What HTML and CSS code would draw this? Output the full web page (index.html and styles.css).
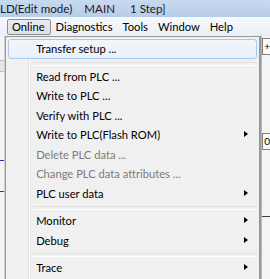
FILE: index.html
```html
<!DOCTYPE html>
<html lang="en">

<head>
    <meta charset="UTF-8">
    <title>Online menu</title>
    <link rel="stylesheet" href="styles.css">
</head>

<body>
    <div class="titlebar">
        <span class="title-part">LD(Edit mode)</span>
        <span class="title-part sheet">MAIN</span>
        <span class="title-part">1 Step]</span>
    </div>
    <div class="menubar">
        <span class="menubar-item open">Online</span>
        <span class="menubar-item">Diagnostics</span>
        <span class="menubar-item">Tools</span>
        <span class="menubar-item">Window</span>
        <span class="menubar-item">Help</span>
    </div>
    <div class="workspace">
        <div class="left-pane">
            <div class="pane-box"></div>
            <div class="pane-line blue"></div>
            <div class="pane-line dark"></div>
            <div class="pane-line blue"></div>
        </div>
        <ul class="dropdown">
            <li class="item active">Transfer setup ...</li>
            <li class="sep"></li>
            <li class="item">Read from PLC ...</li>
            <li class="item">Write to PLC ...</li>
            <li class="item">Verify with PLC ...</li>
            <li class="item sub">Write to PLC(Flash ROM)</li>
            <li class="item disabled">Delete PLC data ...</li>
            <li class="item disabled">Change PLC data attributes ...</li>
            <li class="item sub">PLC user data</li>
            <li class="sep"></li>
            <li class="item sub">Monitor</li>
            <li class="item sub">Debug</li>
            <li class="sep"></li>
            <li class="item sub">Trace</li>
        </ul>
        <div class="shadow"></div>
        <div class="right-pane">
            <div class="pane-btn">+</div>
            <div class="pane-btn">0</div>
            <div class="pane-line dark"></div>
        </div>
    </div>
</body>

</html>
```

FILE: styles.css
```css
* {
    margin: 0;
    padding: 0;
    box-sizing: border-box;
}

body {
    width: 270px;
    height: 279px;
    overflow: hidden;
    font-family: Lato, "Noto Sans", sans-serif;
    font-size: 11.2px;
    color: #000;
    background-color: #f0f0f0;
}

.titlebar {
    display: flex;
    align-items: center;
    height: 17px;
    font-size: 11.6px;
    background: linear-gradient(#c8daef, #b6cde8);
    color: #1a1a1a;
    white-space: nowrap;
}

.title-part {
    margin-right: 12px;
}

.sheet {
    color: #3a1010;
    margin-right: 15px;
}

.menubar {
    display: flex;
    align-items: center;
    height: 19px;
    padding-left: 7px;
    background: linear-gradient(#f7fafd, #e9eff7);
}

.menubar-item {
    padding: 0 4px;
    height: 16px;
    line-height: 14px;
    border: 1px solid transparent;
    border-radius: 2px;
}

.menubar-item.open {
    padding: 0 5px 0 4px;
    border-color: #8e8f8f;
    background: linear-gradient(#e8ebef, #dde2e8);
}

.workspace {
    display: flex;
    height: 243px;
}

.left-pane {
    width: 7px;
    display: flex;
    flex-direction: column;
    background-color: #f4f4f4;
    border-right: 1px solid #d0d0d0;
}

.pane-box {
    height: 60px;
    margin-top: 24px;
    border-top: 1px solid #c0c0c0;
    border-bottom: 1px solid #c0c0c0;
    background-color: #e6e6e6;
}

.pane-line {
    height: 1px;
    margin-top: 30px;
}

.pane-line.blue {
    background-color: #2030c0;
    margin-top: 88px;
}

.pane-line.dark {
    background-color: #404040;
}

.dropdown {
    list-style: none;
    width: 255px;
    flex-shrink: 0;
    padding: 2px 2px 0;
    border: 1px solid #979797;
    border-bottom: none;
    background: linear-gradient(to right, #f1f1f1 22px, #e2e3e3 22px, #e2e3e3 23px, #fff 23px, #fff 24px, #f0f0f0 24px);
}

.item {
    position: relative;
    height: 19.5px;
    line-height: 18px;
    padding-left: 27px;
    border: 1px solid transparent;
    border-radius: 3px;
    white-space: nowrap;
}

.item.active {
    border-color: #a8caf0;
    background: linear-gradient(#f2f6fb, #e9f0f9);
}

.item.disabled {
    color: #7b7b7b;
}

.item.sub::after {
    content: "";
    position: absolute;
    right: 8px;
    top: 5px;
    border-left: 4px solid #000;
    border-top: 3.5px solid transparent;
    border-bottom: 3.5px solid transparent;
}

.sep {
    height: 8px;
    margin-left: 25px;
    padding-top: 3px;
}

.sep::before {
    content: "";
    display: block;
    height: 2px;
    border-top: 1px solid #e0e0e0;
    border-bottom: 1px solid #fff;
}

.shadow {
    width: 3px;
    background: linear-gradient(to right, #8a8a8a, #c8c8c8);
}

.right-pane {
    flex: 1;
    display: flex;
    flex-direction: column;
    background-color: #f4f4f4;
}

.pane-btn {
    height: 17px;
    margin-top: 2px;
    border: 1px solid #808080;
    border-right: none;
    font-size: 10px;
    line-height: 15px;
    padding-left: 1px;
    background-color: #fafafa;
}

.pane-btn + .pane-btn {
    margin-top: 78px;
}

.right-pane .pane-line {
    margin-top: 66px;
}
```
